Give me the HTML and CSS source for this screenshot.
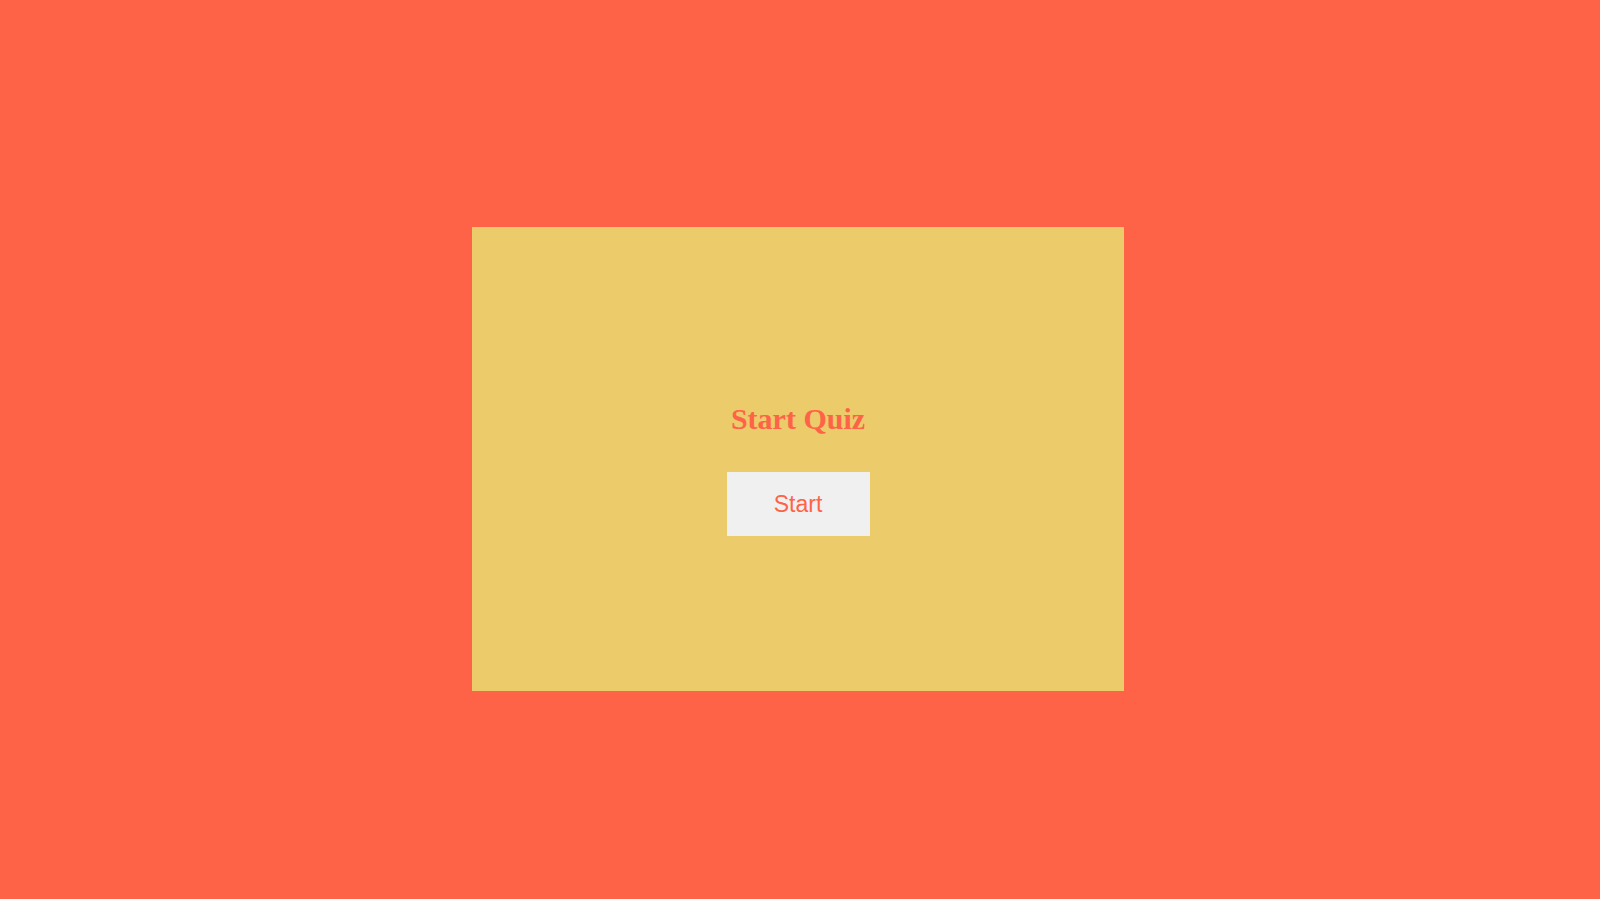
FILE: index.html
```html
<!DOCTYPE html>
<html lang="en">
<head>
<meta charset="utf-8">
<title>Quiz</title>
<link rel="stylesheet" href="styles.css">
</head>
<body>
<main class="stage">
  <section class="card">
    <h1 class="title">Start Quiz</h1>
    <button class="start-btn" type="button">Start</button>
  </section>
</main>
</body>
</html>
```
FILE: styles.css
```css
html, body {
  margin: 0;
  padding: 0;
  background: #ff6347;
}
.stage {
  box-sizing: border-box;
  min-height: 100vh;
  padding: 19px 4px 0 0;
  display: flex;
  align-items: center;
  justify-content: center;
}
.card {
  box-sizing: border-box;
  width: 652px;
  height: 464px;
  padding-top: 20px;
  background: #ebcb6a;
  display: flex;
  flex-direction: column;
  align-items: center;
  justify-content: center;
}
.title {
  margin: 0 0 36px;
  font-family: "Liberation Serif", "Times New Roman", serif;
  font-weight: bold;
  font-size: 30px;
  color: #ff6347;
}
.start-btn {
  width: 143px;
  height: 64px;
  border: none;
  background: #f0f0f0;
  color: #ff6347;
  font-family: "Liberation Sans", Arial, sans-serif;
  font-size: 23px;
  padding: 0;
}
```
